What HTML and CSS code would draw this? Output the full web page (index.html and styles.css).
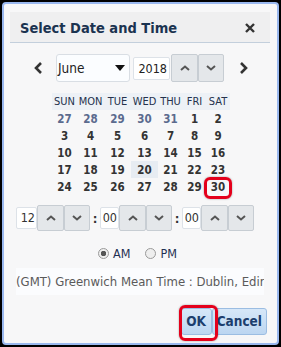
FILE: index.html
```html
<!DOCTYPE html>
<html>
<head>
    <title>Select Date and Time</title>
    <link rel="stylesheet" href="styles.css">
</head>
<body>
    <div class="dialog">
        <div class="dialog-header">
            <span class="dialog-title">Select Date and Time</span>
            <svg class="close" width="12" height="12" viewBox="0 0 12 12">
                <path d="M2 2 L10 10 M10 2 L2 10" stroke="#333" stroke-width="2.4" fill="none"/>
            </svg>
        </div>

        <div class="nav-row">
            <svg class="chev" width="16" height="16" viewBox="0 0 16 16">
                <polyline points="10,3 5,8 10,13" stroke="#333" stroke-width="2.6" fill="none"/>
            </svg>
            <div class="month-select">
                <span>June</span>
                <svg width="10" height="6" viewBox="0 0 10 6"><polygon points="0,0 10,0 5,6" fill="#111"/></svg>
            </div>
            <div class="year-input">2018</div>
            <div class="spin">
                <div class="spin-btn"><svg width="10" height="6" viewBox="0 0 10 6"><polyline points="1,5 5,1.5 9,5" stroke="#555" stroke-width="2" fill="none"/></svg></div>
                <div class="spin-btn"><svg width="10" height="6" viewBox="0 0 10 6"><polyline points="1,1 5,4.5 9,1" stroke="#555" stroke-width="2" fill="none"/></svg></div>
            </div>
            <svg class="chev next" width="16" height="16" viewBox="0 0 16 16">
                <polyline points="6,3 11,8 6,13" stroke="#333" stroke-width="2.6" fill="none"/>
            </svg>
        </div>

        <table class="calendar">
            <colgroup>
                <col style="width:25px"><col style="width:27px"><col style="width:27px"><col style="width:27px">
                <col style="width:25px"><col style="width:23px"><col style="width:24px">
            </colgroup>
            <thead>
                <tr><th>SUN</th><th>MON</th><th>TUE</th><th>WED</th><th>THU</th><th>FRI</th><th>SAT</th></tr>
            </thead>
            <tbody>
                <tr><td class="other">27</td><td class="other">28</td><td class="other">29</td><td class="other">30</td><td class="other">31</td><td>1</td><td>2</td></tr>
                <tr><td>3</td><td>4</td><td>5</td><td>6</td><td>7</td><td>8</td><td>9</td></tr>
                <tr><td>10</td><td>11</td><td>12</td><td>13</td><td>14</td><td>15</td><td>16</td></tr>
                <tr><td>17</td><td>18</td><td>19</td><td class="today">20</td><td>21</td><td>22</td><td>23</td></tr>
                <tr><td>24</td><td>25</td><td>26</td><td>27</td><td>28</td><td>29</td><td>30</td></tr>
            </tbody>
        </table>

        <div class="time-row">
            <div class="time-input hour">12</div>
            <div class="spin">
                <div class="spin-btn"><svg width="10" height="6" viewBox="0 0 10 6"><polyline points="1,5 5,1.5 9,5" stroke="#555" stroke-width="2" fill="none"/></svg></div>
                <div class="spin-btn"><svg width="10" height="6" viewBox="0 0 10 6"><polyline points="1,1 5,4.5 9,1" stroke="#555" stroke-width="2" fill="none"/></svg></div>
            </div>
            <span class="colon">:</span>
            <div class="time-input">00</div>
            <div class="spin">
                <div class="spin-btn"><svg width="10" height="6" viewBox="0 0 10 6"><polyline points="1,5 5,1.5 9,5" stroke="#555" stroke-width="2" fill="none"/></svg></div>
                <div class="spin-btn"><svg width="10" height="6" viewBox="0 0 10 6"><polyline points="1,1 5,4.5 9,1" stroke="#555" stroke-width="2" fill="none"/></svg></div>
            </div>
            <span class="colon">:</span>
            <div class="time-input">00</div>
            <div class="spin">
                <div class="spin-btn"><svg width="10" height="6" viewBox="0 0 10 6"><polyline points="1,5 5,1.5 9,5" stroke="#555" stroke-width="2" fill="none"/></svg></div>
                <div class="spin-btn"><svg width="10" height="6" viewBox="0 0 10 6"><polyline points="1,1 5,4.5 9,1" stroke="#555" stroke-width="2" fill="none"/></svg></div>
            </div>
        </div>

        <div class="ampm">
            <span class="radio checked"></span><span class="radio-label">AM</span>
            <span class="radio"></span><span class="radio-label">PM</span>
        </div>

        <div class="timezone">(GMT) Greenwich Mean Time : Dublin, Edinburgh, Lisbon, London</div>

        <div class="buttons">
            <div class="btn">OK</div>
            <div class="btn">Cancel</div>
        </div>

        <div class="callout day-callout"></div>
        <div class="callout ok-callout"></div>
    </div>
</body>
</html>
```

FILE: styles.css
```css
body {
    margin: 0;
    padding: 2px;
    background: #000;
    font-family: "DejaVu Sans Condensed", "Liberation Sans", sans-serif;
}
.dialog {
    position: relative;
    box-sizing: border-box;
    width: 277px;
    height: 343px;
    border: 2px solid #9ab8ef;
    border-radius: 4px;
    background: #f7f7f8;
    padding: 8px 7px 0 6px;
}
.dialog-header {
    display: flex;
    align-items: center;
    justify-content: space-between;
    height: 30px;
    padding: 1px 14px 0 10px;
    box-sizing: border-box;
    height: 31px;
    background: #efeff0;
    border-bottom: 1px solid #c3cfdc;
}
.dialog-title {
    font-weight: bold;
    font-size: 14.5px;
    color: #1b3350;
}
.nav-row {
    display: flex;
    align-items: center;
    margin-top: 11px;
    padding-left: 21px;
    height: 28px;
}
.chev.next {
    margin-left: 11px;
}
.month-select {
    display: flex;
    align-items: center;
    justify-content: space-between;
    box-sizing: border-box;
    width: 74px;
    height: 28px;
    margin-left: 9px;
    padding: 0 4px 0 1px;
    background: #fbfdff;
    border: 1px solid #d9dee4;
    border-radius: 3px;
    font-size: 13.5px;
    color: #222;
}
.year-input {
    box-sizing: border-box;
    width: 37px;
    height: 23px;
    margin: 0 1px 0 3px;
    padding: 0 2px;
    line-height: 21px;
    text-align: right;
    background: #fff;
    border: 1px solid #dde2e8;
    border-radius: 2px;
    font-size: 12.5px;
    color: #222;
}
.spin {
    display: flex;
}
.spin-btn {
    display: flex;
    align-items: center;
    justify-content: center;
    box-sizing: border-box;
    width: 27px;
    height: 28px;
    background: #e4e7ea;
    border: 1px solid #c7cdd3;
    border-radius: 2px;
}
.spin-btn + .spin-btn {
    width: 26px;
}
.calendar {
    table-layout: fixed;
    border-collapse: collapse;
    width: 178px;
    margin: 11px auto 0;
    position: relative;
    left: 1px;
}
.calendar th {
    height: 17px;
    padding: 0;
    background: #edf1f6;
    font-weight: normal;
    font-size: 11px;
    color: #24324d;
}
.calendar td {
    height: 17px;
    padding: 0;
    text-align: center;
    font-weight: bold;
    font-size: 11.5px;
    color: #333;
}
.calendar td.other {
    color: #5b6a8e;
}
.calendar td.today {
    background: #e7ecf2;
}
.time-row {
    display: flex;
    align-items: center;
    margin-top: 10px;
    padding-left: 6px;
    height: 26px;
}
.time-row .spin-btn {
    height: 26px;
}
.time-input {
    box-sizing: border-box;
    width: 19px;
    height: 22px;
    line-height: 20px;
    text-align: right;
    padding-right: 1px;
    background: #fff;
    border: 1px solid #dde2e8;
    border-radius: 2px;
    font-size: 12.5px;
    color: #333;
}
.time-input.hour {
    width: 21px;
}
.colon {
    width: 10px;
    text-align: center;
    font-size: 13px;
    font-weight: bold;
    color: #333;
}
.ampm {
    display: flex;
    align-items: center;
    margin-top: 15px;
    padding-left: 88px;
    height: 14px;
    font-size: 12.5px;
    color: #1f2f52;
}
.radio {
    box-sizing: border-box;
    width: 11px;
    height: 11px;
    border: 1px solid #9a9a9a;
    border-radius: 50%;
    background: #eee;
}
.radio.checked {
    background: radial-gradient(circle, #555 0 2.5px, #eee 3px);
}
.radio-label {
    margin: 0 15px 0 4px;
}
.timezone {
    box-sizing: border-box;
    margin: 8px 0 0 6px;
    width: 248px;
    height: 27px;
    line-height: 27px;
    overflow: hidden;
    white-space: nowrap;
    background: #fbfcfe;
    font-size: 13px;
    color: #5a5a5a;
}
.buttons {
    display: flex;
    justify-content: flex-end;
    margin-top: 13px;
    padding-right: 3px;
}
.btn {
    box-sizing: border-box;
    height: 27px;
    line-height: 25px;
    padding: 0 4px;
    background: linear-gradient(#d6e7f8, #bcd6f1);
    border: 1px solid #9bbde2;
    border-radius: 3px;
    font-weight: bold;
    font-size: 13.5px;
    color: #1c3e6e;
}
.btn:first-child {
    width: 31px;
    text-align: center;
    padding: 0;
}
.callout {
    position: absolute;
    border: 3px solid #e4001b;
    border-radius: 6px;
    box-shadow: 0 0 2px rgba(0,0,0,0.4);
}
.day-callout {
    left: 200px;
    top: 173px;
    width: 22px;
    height: 16px;
}
.ok-callout {
    left: 175px;
    top: 301px;
    width: 33px;
    height: 30px;
}
```
